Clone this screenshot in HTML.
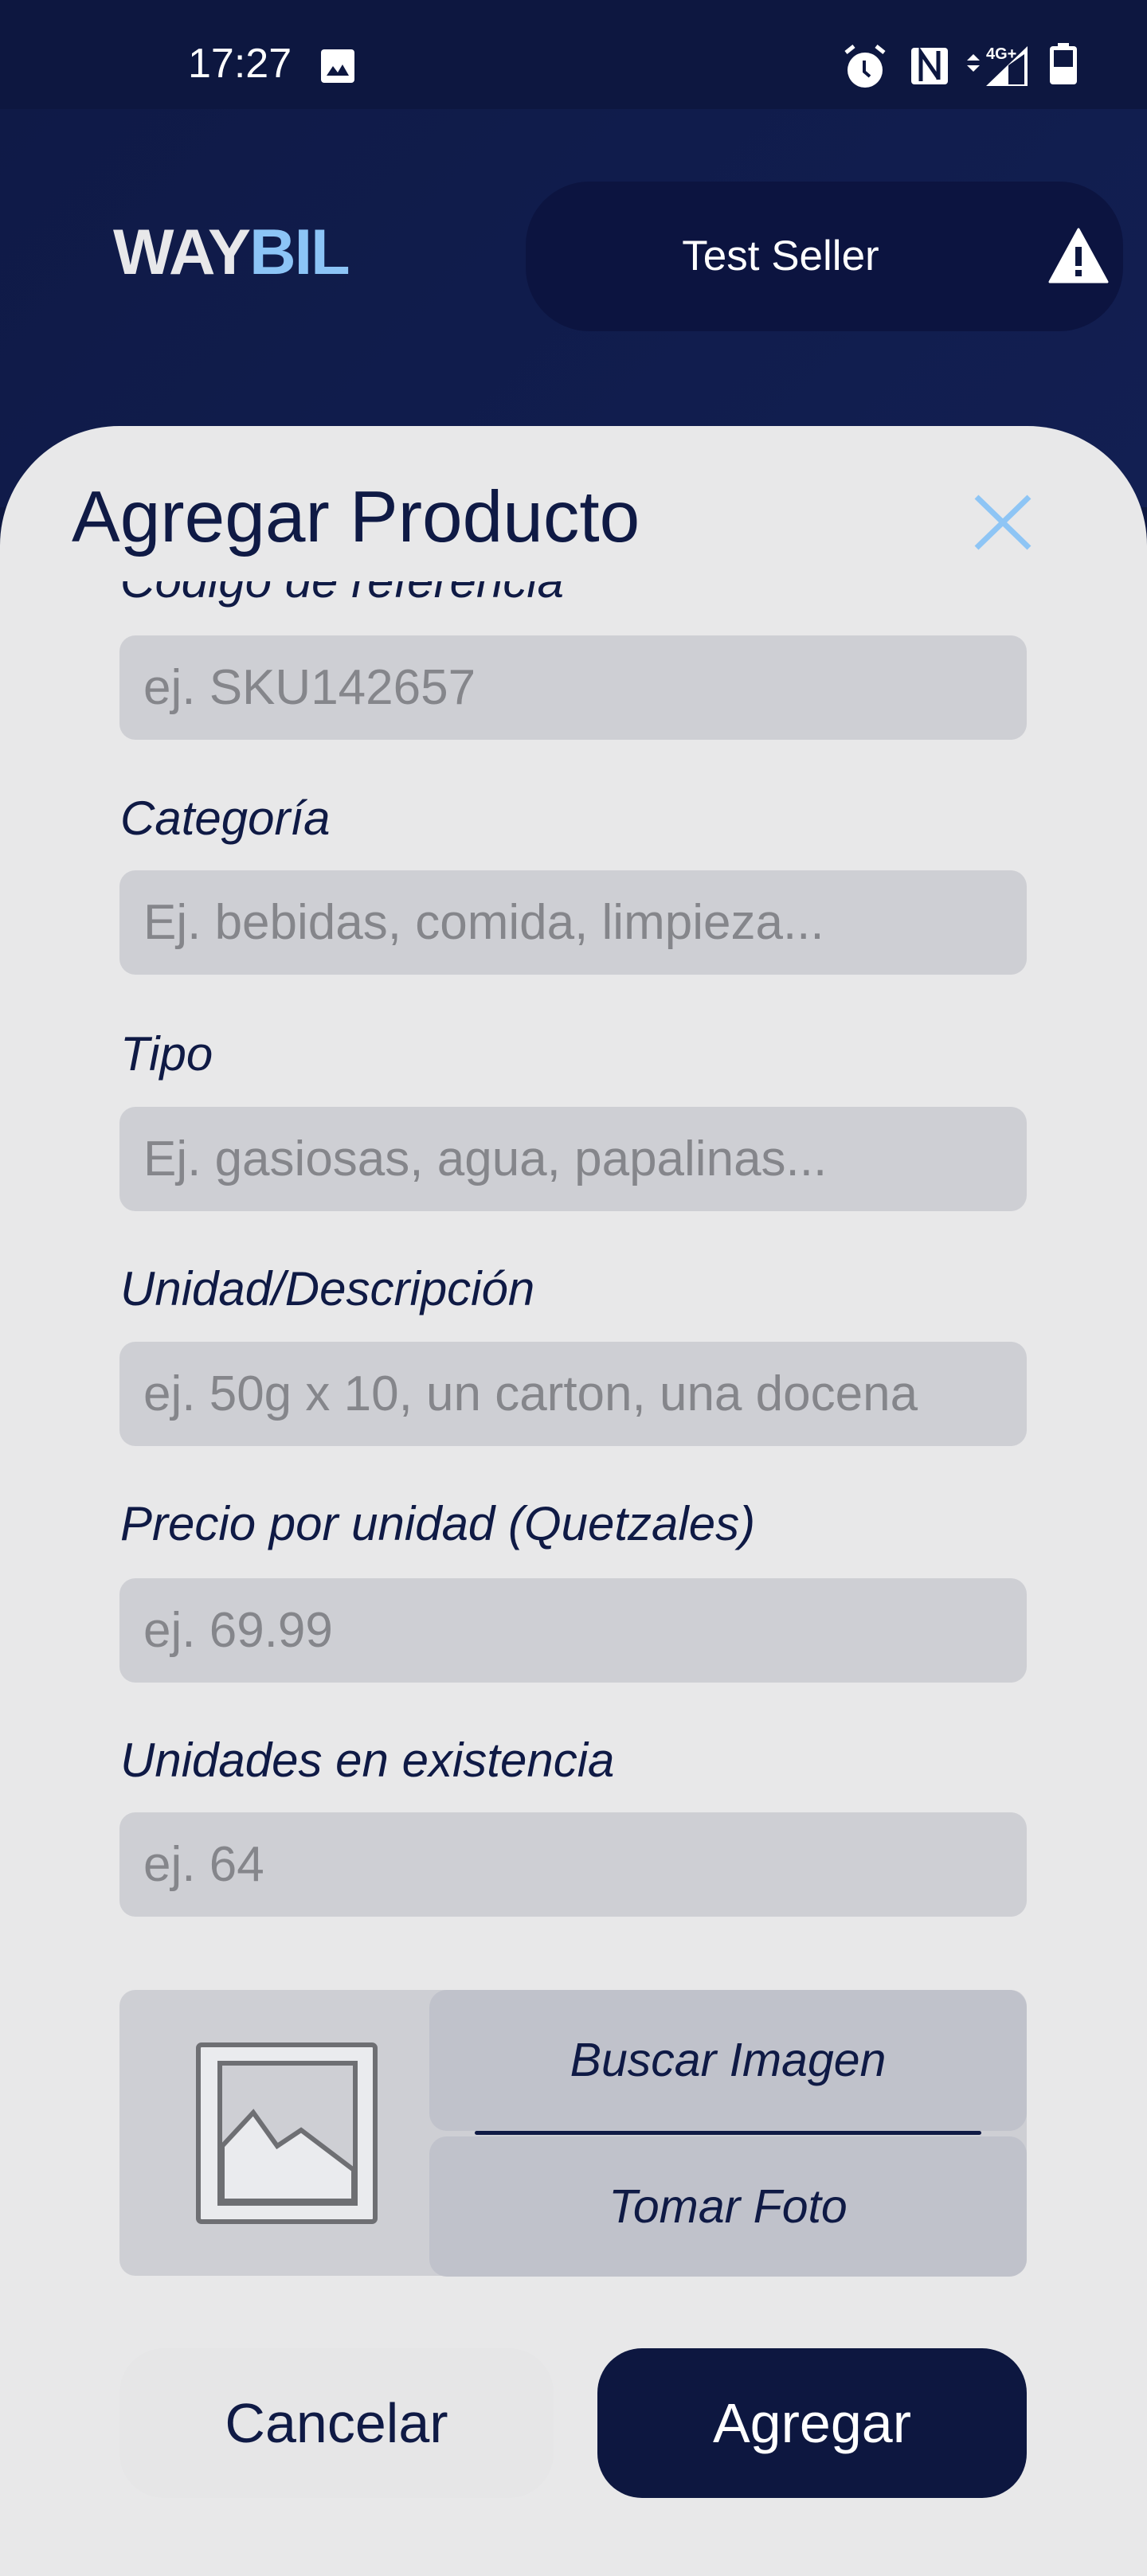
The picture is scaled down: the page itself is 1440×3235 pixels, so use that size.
<!DOCTYPE html>
<html><head><meta charset="utf-8">
<style>
*{margin:0;padding:0;box-sizing:border-box}
body{width:1440px;height:3168px;overflow:hidden;background:#0d1740;font-family:"Liberation Sans",sans-serif;position:relative}
.hdr{position:absolute;left:0;top:137px;width:1440px;height:500px;background:linear-gradient(135deg,#0f1a47,#121f52)}
.abs{position:absolute}
.sheet{position:absolute;left:0;top:535px;width:1440px;height:2700px;background:#e8e8e9;border-radius:150px 150px 0 0}
.lbl{position:absolute;left:151px;font-style:italic;font-size:60px;color:#0f1a45;line-height:1}
.inp{position:absolute;left:150px;width:1139px;height:131px;background:#cecfd4;border-radius:20px;color:#85868b;font-size:62px;padding-left:30px;line-height:131px;white-space:nowrap}
</style></head><body>
<div class="hdr"></div>
<div class="abs" style="left:236px;top:50px;color:#fff;font-size:52px;line-height:60px;">17:27</div>
<svg class="abs" style="left:402px;top:61px" width="44" height="44" viewBox="0 0 44 44"><rect x="1" y="1" width="42" height="42" rx="4" fill="#fff"/><path d="M8 34 L16 22 L22 30 L28 20 L36 34Z" fill="#0d1740"/></svg>
<svg class="abs" style="left:1058px;top:54px" width="56" height="58" viewBox="0 0 56 58"><circle cx="28" cy="34" r="22" fill="#fff"/><path d="M27 22 V36 L34 42" stroke="#0d1740" stroke-width="4" fill="none"/><path d="M4 12 L14 4 M52 12 L42 4" stroke="#fff" stroke-width="5"/></svg>
<svg class="abs" style="left:1144px;top:60px" width="46" height="46" viewBox="0 0 46 46"><rect x="0" y="0" width="46" height="46" rx="4" fill="#fff"/><path d="M12 42 V6 L34 38 M34 4 V40" stroke="#0d1740" stroke-width="5" fill="none"/></svg>
<svg class="abs" style="left:1212px;top:54px" width="80" height="56" viewBox="0 0 80 56"><path d="M2 22 L10 14 L18 22Z M2 28 L10 36 L18 28Z" fill="#fff"/><path d="M26 54 L78 4 V54Z" fill="#fff"/><path d="M54 28 V52 H74 V14Z" fill="#0d1740"/><text x="26" y="20" font-size="20" font-weight="bold" fill="#fff" font-family="Liberation Sans">4G+</text></svg>
<svg class="abs" style="left:1318px;top:54px" width="34" height="52" viewBox="0 0 34 52"><rect x="10" y="0" width="14" height="6" fill="#fff"/><rect x="0" y="4" width="34" height="48" rx="4" fill="#fff"/><rect x="5" y="9" width="24" height="21" fill="#0d1740"/></svg>
<div class="abs" style="left:142px;top:272px;font-size:81px;font-weight:bold;letter-spacing:-2px;line-height:90px;color:#e8e8ea">WAY<span style="color:#8cc4f6">BIL</span></div>
<div class="abs" style="left:660px;top:228px;width:750px;height:188px;background:#0c1440;border-radius:80px"></div>
<div class="abs" style="left:800px;top:290px;width:360px;text-align:center;color:#fff;font-size:53px;line-height:64px">Test Seller</div>
<svg class="abs" style="left:1316px;top:286px" width="76" height="70" viewBox="0 0 76 70"><path d="M38 2 L74 68 H2Z" fill="#fff" stroke="#fff" stroke-width="3" stroke-linejoin="round"/><rect x="34" y="24" width="8" height="24" fill="#0d1740"/><rect x="34" y="53" width="8" height="8" fill="#0d1740"/></svg>
<div class="sheet"></div>
<div class="abs" style="left:90px;top:600px;font-size:91px;color:#0f1a45;line-height:100px">Agregar Producto</div>
<svg class="abs" style="left:1222px;top:620px" width="74" height="72" viewBox="0 0 74 72"><path d="M4 4 L70 68 M70 4 L4 68" stroke="#8ec5f5" stroke-width="7"/></svg>
<div class="abs" style="left:0;top:730px;width:1440px;height:2438px;overflow:hidden">
  <div class="lbl" style="top:-30px">Código de referencia</div>
  <div class="inp" style="top:68px">ej. SKU142657</div>
  <div class="lbl" style="top:268px">Categoría</div>
  <div class="inp" style="top:363px">Ej. bebidas, comida, limpieza...</div>
  <div class="lbl" style="top:564px">Tipo</div>
  <div class="inp" style="top:660px">Ej. gasiosas, agua, papalinas...</div>
  <div class="lbl" style="top:859px">Unidad/Descripción</div>
  <div class="inp" style="top:955px">ej. 50g x 10, un carton, una docena</div>
  <div class="lbl" style="top:1154px">Precio por unidad (Quetzales)</div>
  <div class="inp" style="top:1252px">ej. 69.99</div>
  <div class="lbl" style="top:1451px">Unidades en existencia</div>
  <div class="inp" style="top:1546px">ej. 64</div>
  <div class="abs" style="left:150px;top:1769px;width:1139px;height:359px;background:#cecfd4;border-radius:20px"></div>
  <svg class="abs" style="left:246px;top:1835px" width="228" height="228" viewBox="0 0 228 228"><rect x="3" y="3" width="222" height="222" rx="4" fill="#eaebee" stroke="#6e6f73" stroke-width="6"/><rect x="30" y="26" width="170" height="176" fill="#cecfd4" stroke="#6e6f73" stroke-width="6"/><path d="M33 130 L72 88 L102 130 L132 110 L198 160 V199 H33Z" fill="#eaebee" stroke="#6e6f73" stroke-width="6"/></svg>
  <div class="abs" style="left:539px;top:1769px;width:750px;height:177px;background:#c0c2cb;border-radius:22px;text-align:center;line-height:177px;font-style:italic;font-size:59px;color:#0f1a45">Buscar Imagen</div>
  <div class="abs" style="left:596px;top:1946px;width:636px;height:5px;background:#0f1a45;border-radius:3px"></div>
  <div class="abs" style="left:539px;top:1953px;width:750px;height:176px;background:#c0c2cb;border-radius:22px;text-align:center;line-height:176px;font-style:italic;font-size:59px;color:#0f1a45">Tomar Foto</div>
  <div class="abs" style="left:150px;top:2219px;width:545px;height:188px;background:#e6e6e7;border-radius:56px;text-align:center;line-height:188px;font-size:70px;color:#0f1a45">Cancelar</div>
  <div class="abs" style="left:750px;top:2219px;width:539px;height:188px;background:#0d1740;border-radius:56px;text-align:center;line-height:188px;font-size:70px;color:#fff">Agregar</div>
</div>
</body></html>
